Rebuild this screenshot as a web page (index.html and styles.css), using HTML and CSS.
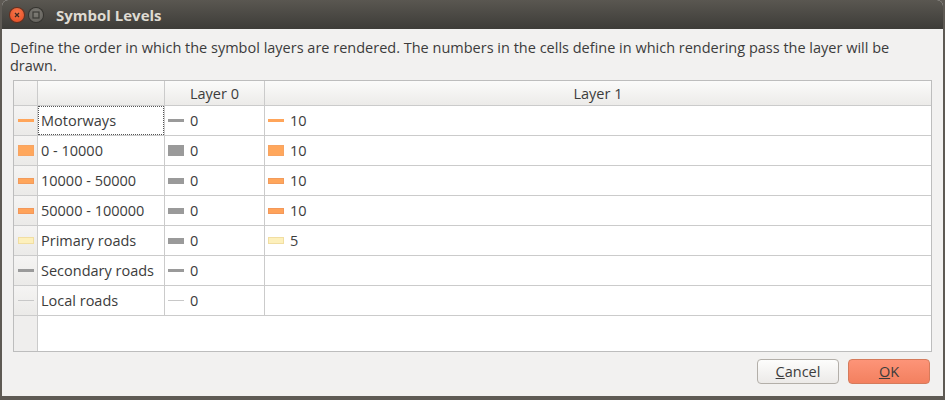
FILE: index.html
```html
<!DOCTYPE html>
<html>
<head>
<meta charset="utf-8">
<link rel="stylesheet" href="styles.css">
</head>
<body>
<div class="window">
  <div class="titlebar">
    <span class="tb-btn close"><svg width="14" height="14" viewBox="0 0 14 14"><path d="M5 5 L9 9 M9 5 L5 9" stroke="#3c2a22" stroke-width="1.3" fill="none"/></svg></span>
    <span class="tb-btn max"><svg width="14" height="14" viewBox="0 0 14 14"><rect x="4" y="4" width="6" height="6" stroke="#3a3935" stroke-width="1.2" fill="none"/></svg></span>
    <span class="title">Symbol Levels</span>
  </div>
  <div class="content">
    <p class="desc">Define the order in which the symbol layers are rendered. The numbers in the cells define in which rendering pass the layer will be drawn.</p>
    <div class="grid">
      <div class="hdr corner"></div>
      <div class="hdr"></div>
      <div class="hdr center">Layer 0</div>
      <div class="hdr center">Layer 1</div>

      <div class="rh"><span class="ic line-o"></span></div>
      <div class="cell name focus">Motorways</div>
      <div class="cell"><span class="ic line-g"></span>0</div>
      <div class="cell"><span class="ic line-o"></span>10</div>

      <div class="rh"><span class="ic big-o"></span></div>
      <div class="cell name">0 - 10000</div>
      <div class="cell"><span class="ic big-g"></span>0</div>
      <div class="cell"><span class="ic big-o"></span>10</div>

      <div class="rh"><span class="ic mid-o"></span></div>
      <div class="cell name">10000 - 50000</div>
      <div class="cell"><span class="ic mid-g"></span>0</div>
      <div class="cell"><span class="ic mid-o"></span>10</div>

      <div class="rh"><span class="ic sm-o"></span></div>
      <div class="cell name">50000 - 100000</div>
      <div class="cell"><span class="ic sm-g"></span>0</div>
      <div class="cell"><span class="ic sm-o"></span>10</div>

      <div class="rh"><span class="ic mid-y"></span></div>
      <div class="cell name">Primary roads</div>
      <div class="cell"><span class="ic mid-g"></span>0</div>
      <div class="cell"><span class="ic mid-y"></span>5</div>

      <div class="rh"><span class="ic line-g"></span></div>
      <div class="cell name">Secondary roads</div>
      <div class="cell"><span class="ic line-g"></span>0</div>
      <div class="cell"></div>

      <div class="rh"><span class="ic hair"></span></div>
      <div class="cell name">Local roads</div>
      <div class="cell"><span class="ic hair"></span>0</div>
      <div class="cell"></div>

      <div class="rh filler"></div>
      <div class="cell filler span3"></div>
    </div>
    <div class="buttons">
      <button class="btn"><u>C</u>ancel</button>
      <button class="btn ok"><u>O</u>K</button>
    </div>
  </div>
</div>
</body>
</html>
```

FILE: styles.css
```css
html, body {
  margin: 0;
  padding: 0;
}
body {
  background: #5e5a54;
  width: 945px;
  height: 400px;
  overflow: hidden;
  font-family: "Open Sans", "DejaVu Sans", sans-serif;
  font-size: 14.5px;
  color: #3c3c3c;
}
.window {
  margin-left: 2px;
  width: 941px;
  height: 396px;
  background: #f2f1f0;
  border-radius: 6px 6px 0 0;
  overflow: hidden;
  display: flex;
  flex-direction: column;
}
.titlebar {
  height: 29px;
  flex: none;
  background: linear-gradient(#5a5751, #3d3c38);
  display: flex;
  align-items: center;
  padding-left: 8px;
  gap: 5px;
}
.tb-btn {
  width: 14px;
  height: 14px;
  border-radius: 50%;
  display: flex;
}
.close {
  background: radial-gradient(circle at 50% 35%, #f7784c, #e4481f);
  box-shadow: 0 0 0 1px #6a2e1c;
}
.max {
  background: radial-gradient(circle at 50% 35%, #7e7c76, #5f5d58);
  box-shadow: 0 0 0 1px #34332f;
}
.title {
  margin-left: 8px;
  font-weight: bold;
  font-size: 15px;
  color: #dfdbd2;
}
.content {
  flex: 1;
  display: flex;
  flex-direction: column;
  padding: 10px 11px 0 11px;
}
.desc {
  margin: 0 0 5px -3px;
  line-height: 18px;
}
.grid {
  display: grid;
  grid-template-columns: 23px 126px 99px 1fr;
  grid-template-rows: 24px repeat(7, 29px) 35px;
  gap: 1px;
  background: #cbcbcb;
  border: 1px solid #bdbdbd;
}
.hdr {
  background: linear-gradient(#fbfbfa, #ecebe9);
  display: flex;
  align-items: center;
}
.hdr.center {
  justify-content: center;
}
.hdr.corner {
  background: linear-gradient(#f6f5f4, #ebeae8);
}
.rh {
  background: linear-gradient(#f5f4f3, #ebeae8);
  display: flex;
  align-items: center;
  justify-content: center;
}
.rh.filler {
  background: #efeeed;
}
.cell {
  background: #ffffff;
  display: flex;
  align-items: center;
  padding-left: 3px;
}
.cell.focus {
  outline: 1px dotted #555;
  outline-offset: -1px;
}
.cell.filler {
  padding: 0;
}
.span3 {
  grid-column: 2 / 5;
}
.cell .ic {
  margin-right: 6px;
}
.ic {
  display: inline-block;
  width: 16px;
  flex: none;
  box-sizing: border-box;
}
.line-o { height: 3px; background: #ffa55a; }
.line-g { height: 3px; background: #9a9a9a; }
.big-o { height: 11px; background: #ffa75c; border: 1px solid #f7a462; }
.big-g { height: 11px; background: #9a9a9a; }
.mid-o { height: 6px; background: #ffa65b; border: 1px solid #f29b5c; }
.mid-g { height: 6px; background: #9a9a9a; }
.sm-o { height: 6px; background: #ffa35a; border: 1px solid #f3985a; }
.sm-g { height: 6px; background: #9a9a9a; }
.mid-y { height: 7px; background: #fdf0bc; border: 1px solid #f1dea2; }
.hair { height: 1px; background: #c8c8c8; }
.buttons {
  display: flex;
  justify-content: flex-end;
  gap: 9px;
  margin-top: 7px;
  padding-right: 2px;
}
.btn {
  width: 82px;
  height: 25px;
  border-radius: 4px;
  border: 1px solid #b3afa9;
  background: linear-gradient(#fdfdfc, #eceae8);
  font-family: "Open Sans", "DejaVu Sans", sans-serif;
  font-size: 14.5px;
  color: #3c3c3c;
  padding: 0;
}
.btn.ok {
  background: linear-gradient(#fd9478, #f3805f);
  border-color: #d57b5c;
}
```
